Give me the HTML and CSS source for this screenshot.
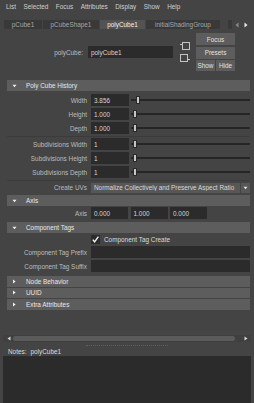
FILE: index.html
```html
<!DOCTYPE html>
<html>
<head>
<meta charset="utf-8">
<link rel="stylesheet" href="styles.css">
</head>
<body>
<div class="menubar">
  <span>List</span><span>Selected</span><span>Focus</span><span>Attributes</span><span>Display</span><span>Show</span><span>Help</span>
</div>

<div class="tabs">
  <div class="tab t1">pCube1</div>
  <div class="tab t2">pCubeShape1</div>
  <div class="tab t3 active">polyCube1</div>
  <div class="tab t4">initialShadingGroup</div>
  <div class="tab tab-clip"></div>
  <div class="tab-arrows">
    <svg width="4" height="6" viewBox="0 0 4 6"><path d="M3.5 0.5 L0.5 3 L3.5 5.5 Z" fill="#8a8a8a"/></svg>
    <svg width="4" height="6" viewBox="0 0 4 6"><path d="M0.5 0.5 L3.5 3 L0.5 5.5 Z" fill="#e8e8e8"/></svg>
  </div>
</div>

<div class="namerow">
  <div class="namefield">
    <span class="namelabel">polyCube:</span>
    <div class="field namebox">polyCube1</div>
  </div>
  <div class="icons">
    <svg width="10" height="8" viewBox="0 0 10 8"><rect x="2.5" y="0.5" width="7" height="7" fill="none" stroke="#c4c4c4" stroke-width="1"/><path d="M0 2.5 H3" stroke="#c4c4c4" stroke-width="1"/></svg>
    <svg width="10" height="8" viewBox="0 0 10 8"><rect x="0.5" y="0.5" width="7" height="7" fill="none" stroke="#c4c4c4" stroke-width="1"/><path d="M7 5.5 H10" stroke="#c4c4c4" stroke-width="1"/></svg>
  </div>
  <div class="btns">
    <div class="btn wide">Focus</div>
    <div class="btn wide">Presets</div>
    <div class="btn">Show</div>
    <div class="btn">Hide</div>
  </div>
</div>

<div class="editor">
  <div class="section">
    <div class="section-head">
      <svg class="tri" width="5" height="4" viewBox="0 0 5 4"><path d="M0.5 0.8 L4.5 0.8 L2.5 3.2 Z" fill="#f0f0f0"/></svg>
      <span>Poly Cube History</span>
    </div>
    <div class="rows pb1">
      <div class="row"><span class="lbl">Width</span><div class="field num">3.856</div><div class="slider"><div class="thumb" style="left:5px"></div></div></div>
      <div class="row"><span class="lbl">Height</span><div class="field num">1.000</div><div class="slider"><div class="thumb" style="left:2px"></div></div></div>
      <div class="row"><span class="lbl">Depth</span><div class="field num">1.000</div><div class="slider"><div class="thumb" style="left:2px"></div></div></div>
      <div class="sep"></div>
      <div class="row"><span class="lbl">Subdivisions Width</span><div class="field num">1</div><div class="slider"><div class="thumb" style="left:2px"></div></div></div>
      <div class="row"><span class="lbl">Subdivisions Height</span><div class="field num">1</div><div class="slider"><div class="thumb" style="left:2px"></div></div></div>
      <div class="row"><span class="lbl">Subdivisions Depth</span><div class="field num">1</div><div class="slider"><div class="thumb" style="left:2px"></div></div></div>
      <div class="sep"></div>
      <div class="row row-select"><span class="lbl">Create UVs</span>
        <div class="select"><span class="select-text">Normalize Collectively and Preserve Aspect Ratio</span>
          <span class="select-arrow"><svg width="5" height="4" viewBox="0 0 5 4"><path d="M0.5 0.8 L4.5 0.8 L2.5 3.2 Z" fill="#e8e8e8"/></svg></span>
        </div>
      </div>
    </div>
  </div>

  <div class="section">
    <div class="section-head">
      <svg class="tri" width="5" height="4" viewBox="0 0 5 4"><path d="M0.5 0.8 L4.5 0.8 L2.5 3.2 Z" fill="#f0f0f0"/></svg>
      <span>Axis</span>
    </div>
    <div class="rows0 pb2">
      <div class="row"><span class="lbl">Axis</span><div class="field ax">0.000</div><div class="field ax">1.000</div><div class="field ax">0.000</div></div>
    </div>
  </div>

  <div class="section">
    <div class="section-head">
      <svg class="tri" width="5" height="4" viewBox="0 0 5 4"><path d="M0.5 0.8 L4.5 0.8 L2.5 3.2 Z" fill="#f0f0f0"/></svg>
      <span>Component Tags</span>
    </div>
    <div class="rows0 pb3">
      <div class="row row-check"><span class="lbl"></span>
        <span class="check"><svg width="9" height="9" viewBox="0 0 9 9"><path d="M1.8 4.6 L3.6 6.8 L7.4 1.6" fill="none" stroke="#f2f2f2" stroke-width="1.4"/></svg></span>
        <span class="check-label">Component Tag Create</span>
      </div>
      <div class="row"><span class="lbl">Component Tag Prefix</span><div class="field wide"></div></div>
      <div class="row"><span class="lbl">Component Tag Suffix</span><div class="field wide"></div></div>
    </div>
  </div>

  <div class="section collapsed">
    <div class="section-head">
      <svg class="tri" width="5" height="5" viewBox="0 0 5 5"><path d="M1 0.5 L3.6 2.5 L1 4.5 Z" fill="#f0f0f0"/></svg>
      <span>Node Behavior</span>
    </div>
  </div>
  <div class="section collapsed">
    <div class="section-head">
      <svg class="tri" width="5" height="5" viewBox="0 0 5 5"><path d="M1 0.5 L3.6 2.5 L1 4.5 Z" fill="#f0f0f0"/></svg>
      <span>UUID</span>
    </div>
  </div>
  <div class="section collapsed">
    <div class="section-head">
      <svg class="tri" width="5" height="5" viewBox="0 0 5 5"><path d="M1 0.5 L3.6 2.5 L1 4.5 Z" fill="#f0f0f0"/></svg>
      <span>Extra Attributes</span>
    </div>
  </div>
</div>

<div class="hscroll">
  <svg class="sarrow" width="4" height="5" viewBox="0 0 4 5"><path d="M3.5 0.5 L0.5 2.5 L3.5 4.5 Z" fill="#d8d8d8"/></svg>
  <div class="sthumb"></div>
  <svg class="sarrow right" width="4" height="5" viewBox="0 0 4 5"><path d="M0.5 0.5 L3.5 2.5 L0.5 4.5 Z" fill="#d8d8d8"/></svg>
</div>

<div class="splitter"></div>
<div class="notes-label">Notes:<span class="notes-name">polyCube1</span></div>
<div class="notes"></div>
</body>
</html>
```

FILE: styles.css
```css
* { box-sizing: border-box; margin: 0; padding: 0; }

body {
  background: #444444;
  font-family: "Liberation Sans", Arial, sans-serif;
  font-size: 6.4px;
  color: #bdbdbd;
  width: 254px;
  height: 403px;
  overflow: hidden;
}

.menubar {
  display: flex;
  gap: 7.5px;
  height: 13px;
  align-items: center;
  padding-left: 6px;
  color: #cfcfcf;
}

.tabs {
  display: flex;
  height: 9px;
  margin-top: 7px;
  padding-left: 4px;
  gap: 1px;
}
.tab {
  background: #393939;
  color: #a6a6a6;
  display: flex;
  align-items: center;
  justify-content: center;
  white-space: nowrap;
}
.tab.active { background: #535353; color: #f0f0f0; }
.t1 { width: 38px; }
.t2 { width: 56px; }
.t3 { width: 45px; }
.t4 { width: 74px; }
.tab-clip { width: 4px; margin-left: 7px; }
.tab-arrows { display: flex; align-items: center; gap: 5px; margin-left: 2px; }

.namerow {
  display: flex;
  align-items: center;
  height: 36px;
  margin-top: 5px;
}
.namefield { display: flex; align-items: center; width: 173px; gap: 5px; }
.namelabel { width: 83px; text-align: right; }
.field {
  background: #2b2b2b;
  color: #d6d6d6;
  height: 11.5px;
  display: flex;
  align-items: center;
  padding-left: 3px;
  white-space: nowrap;
}
.namebox { width: 85px; }
.icons { display: flex; flex-direction: column; gap: 4px; margin-left: 7px; }
.btns {
  display: grid;
  grid-template-columns: 19px 19px;
  gap: 1.5px 1px;
  margin-left: 6px;
  width: 39px;
}
.btn {
  background: #5d5d5d;
  color: #e2e2e2;
  height: 11px;
  display: flex;
  align-items: center;
  justify-content: center;
}
.btn.wide { grid-column: span 2; }

.editor {
  margin-top: 10px;
  height: 255px;
  padding: 0 4.5px 0 7px;
}
.section-head {
  height: 11px;
  background: #5d5d5d;
  display: flex;
  align-items: center;
  color: #e8e8e8;
  padding-left: 5px;
}
.section-head .tri { margin-right: 9px; flex: none; }
.collapsed .section-head { height: 10.5px; }
.collapsed { margin-bottom: 1px; }

.rows { padding-top: 2px; }
.pb1 { padding-bottom: 1px; }
.pb2 { padding-bottom: 2px; }
.pb3 { padding-bottom: 3px; }

.row { display: flex; align-items: center; height: 14px; }
.row .lbl { width: 80px; text-align: right; margin-right: 4px; flex: none; white-space: nowrap; }
.num { width: 37.5px; flex: none; }
.slider { flex: 1; margin-left: 2.5px; position: relative; height: 11.5px; }
.slider::before {
  content: "";
  position: absolute;
  left: 0; right: 0; top: 5px;
  height: 1.5px;
  background: #262626;
}
.thumb {
  position: absolute;
  top: 2px;
  width: 3.5px;
  height: 7.5px;
  background: #c6c6c6;
  border: 0.5px solid #2a2a2a;
}
.sep { height: 1px; background: #3b3b3b; margin: 0.5px 0; }

.row-select { height: 13px; }
.select {
  flex: 1;
  height: 10px;
  background: #575757;
  display: flex;
  align-items: center;
  color: #d8d8d8;
}
.select-text { flex: 1; padding-left: 3px; white-space: nowrap; overflow: hidden; }
.select-arrow {
  width: 9.5px;
  height: 100%;
  border-left: 1px solid #444;
  display: flex;
  align-items: center;
  justify-content: center;
}

.ax { width: 37px; margin-right: 2.5px; flex: none; }
.wide { flex: 1; height: 12px; }

.row-check { height: 12px; }
.check {
  width: 9px;
  height: 9px;
  background: #2b2b2b;
  flex: none;
  display: flex;
}
.check-label { margin-left: 4px; color: #dadada; }

.hscroll {
  display: flex;
  align-items: center;
  height: 7px;
  margin: 0 3px;
  padding: 0 3px 0 4px;
  background: #404040;
}
.sthumb {
  flex: 1;
  height: 5px;
  margin: 0 9px 0 2px;
  background: #5b5b5b;
  border-radius: 3px;
}
.sarrow { flex: none; }

.splitter {
  margin: 3px 0 0 86px;
  width: 82px;
  height: 1px;
  border-top: 1px dotted #5e5e5e;
}
.notes-label {
  margin-top: 3px;
  height: 6px;
  line-height: 6px;
  padding-left: 8px;
  color: #dcdcdc;
}
.notes-name { margin-left: 4px; }
.notes {
  margin: 1px 3px 0;
  height: 48px;
  background: #2b2b2b;
}
```
